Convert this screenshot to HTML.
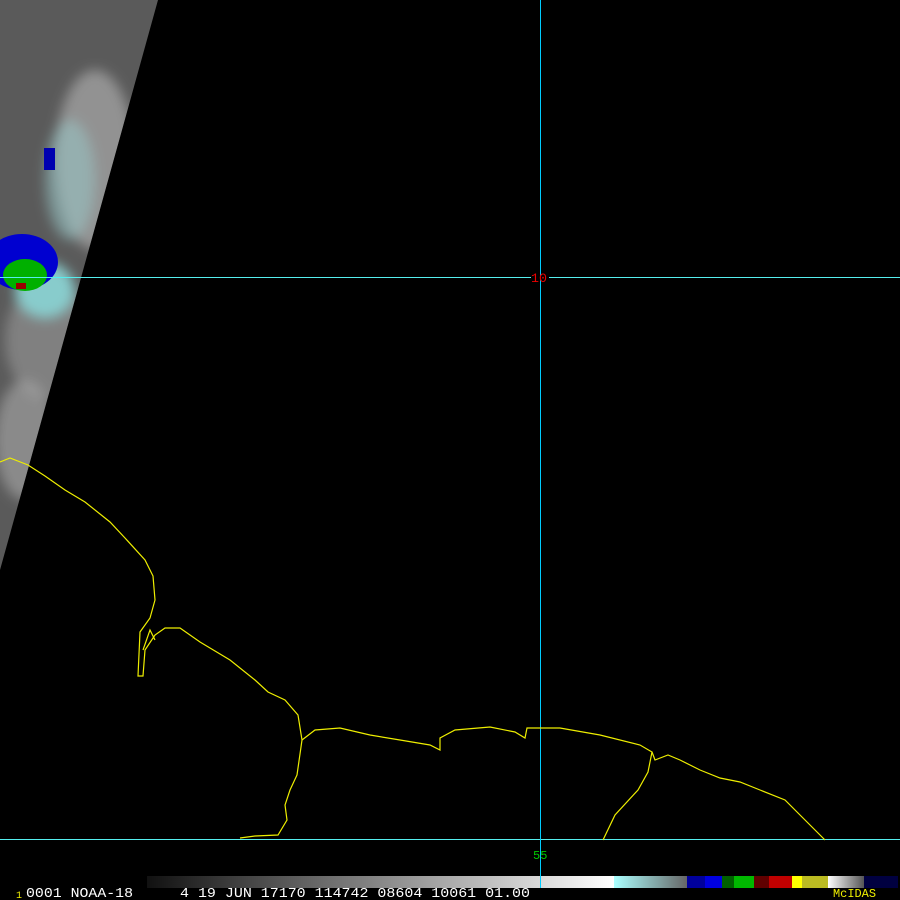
<!DOCTYPE html>
<html><head><style>body{margin:0;background:#000;width:900px;height:900px;overflow:hidden}</style></head><body>
<svg width="900" height="900" xmlns="http://www.w3.org/2000/svg" style="display:block">
<defs>
<linearGradient id="g1" x1="0" x2="1"><stop offset="0" stop-color="#111"/><stop offset="1" stop-color="#fff"/></linearGradient>
<linearGradient id="g2" x1="0" x2="1"><stop offset="0" stop-color="#aff"/><stop offset="1" stop-color="#666"/></linearGradient>
<linearGradient id="g3" x1="0" x2="1"><stop offset="0" stop-color="#fff"/><stop offset="1" stop-color="#555"/></linearGradient>
<clipPath id="sw"><polygon points="0,0 158,0 0,570"/></clipPath>
<filter id="bl"><feGaussianBlur stdDeviation="6"/></filter>
</defs>
<rect width="900" height="900" fill="#000"/>
<polygon points="0,0 158,0 0,570" fill="#5a5a5a"/>
<g clip-path="url(#sw)">
<g filter="url(#bl)">
<ellipse cx="95" cy="160" rx="40" ry="90" fill="#aaa" opacity="0.7"/>
<ellipse cx="70" cy="180" rx="25" ry="60" fill="#9cc" opacity="0.5"/>
<ellipse cx="50" cy="340" rx="45" ry="60" fill="#999" opacity="0.6"/>
<ellipse cx="25" cy="440" rx="30" ry="60" fill="#aaa" opacity="0.6"/>
<ellipse cx="45" cy="290" rx="30" ry="28" fill="#8cc"/>
</g>
<ellipse cx="22" cy="262" rx="36" ry="28" fill="#0000d0"/>
<ellipse cx="25" cy="275" rx="22" ry="16" fill="#00b000"/>
<rect x="16" y="283" width="10" height="6" fill="#900"/>
<rect x="44" y="148" width="11" height="22" fill="#0000b0"/>
</g>
<line x1="0" y1="277.5" x2="900" y2="277.5" stroke="#5ee" stroke-width="1"/>
<line x1="0" y1="839.5" x2="900" y2="839.5" stroke="#5ee" stroke-width="1"/>
<line x1="540.5" y1="0" x2="540.5" y2="888" stroke="#0cf" stroke-width="1"/>
<rect x="531" y="271" width="18" height="12" fill="#000"/>
<line x1="540.5" y1="260" x2="540.5" y2="290" stroke="#0cf"/>
<text x="531" y="282" font-family="Liberation Mono,monospace" font-size="13" fill="#e00" textLength="16" lengthAdjust="spacingAndGlyphs">10</text>
<text x="533" y="859" font-family="Liberation Mono,monospace" font-size="12" fill="#0c0">55</text>
<g fill="none" stroke="#ee0" stroke-width="1.2">
<polyline points="0,462 10,458 28,465 45,476 65,490 85,502 110,522 125,538 145,560 153,576 155,600 150,618 140,632 138,676 143,676 145,650 155,635 165,628 180,628 200,642 230,660 255,680 268,692 285,700 298,715 302,740 297,775 290,790 285,805 287,820 278,835 255,836 240,838"/>
<polyline points="143,650 150,630 155,640"/>
<polyline points="302,740 315,730 340,728 370,735 400,740 430,745 440,750 440,738 455,730 490,727 515,732 525,738 527,728 560,728 600,735 640,745 652,752 648,772 638,790 615,815 603,840"/>
<polyline points="652,752 655,760 668,755 680,760 700,770 720,778 740,782 760,790 785,800 800,815 815,830 825,840"/>
</g>
<rect x="147" y="876" width="467" height="12" fill="url(#g1)"/>
<rect x="614" y="876" width="73" height="12" fill="url(#g2)"/>
<rect x="687" y="876" width="35" height="12" fill="#00009c"/>
<rect x="705" y="876" width="17" height="12" fill="#0000e0"/>
<rect x="722" y="876" width="32" height="12" fill="#00b800"/>
<rect x="722" y="876" width="12" height="12" fill="#006000"/>
<rect x="754" y="876" width="38" height="12" fill="#c00000"/>
<rect x="754" y="876" width="15" height="12" fill="#600000"/>
<rect x="792" y="876" width="36" height="12" fill="#bb2"/>
<rect x="792" y="876" width="10" height="12" fill="#ff0"/>
<rect x="828" y="876" width="36" height="12" fill="url(#g3)"/>
<rect x="864" y="876" width="34" height="12" fill="#000040"/>
<line x1="540.5" y1="876" x2="540.5" y2="888" stroke="#0cf"/>
<text x="16" y="898" font-family="Liberation Mono,monospace" font-size="10" fill="#ee0">1</text>
<text x="26" y="897" font-family="Liberation Mono,monospace" font-size="14" fill="#fff" textLength="107" lengthAdjust="spacingAndGlyphs">0001 NOAA-18</text>
<text x="180" y="897" font-family="Liberation Mono,monospace" font-size="14" fill="#fff" textLength="350" lengthAdjust="spacingAndGlyphs" xml:space="preserve">4 19 JUN 17170 114742 08604 10061 01.00</text>
<text x="833" y="897" font-family="Liberation Mono,monospace" font-size="12" fill="#ee0" textLength="43" lengthAdjust="spacingAndGlyphs">McIDAS</text>
</svg>
</body></html>
